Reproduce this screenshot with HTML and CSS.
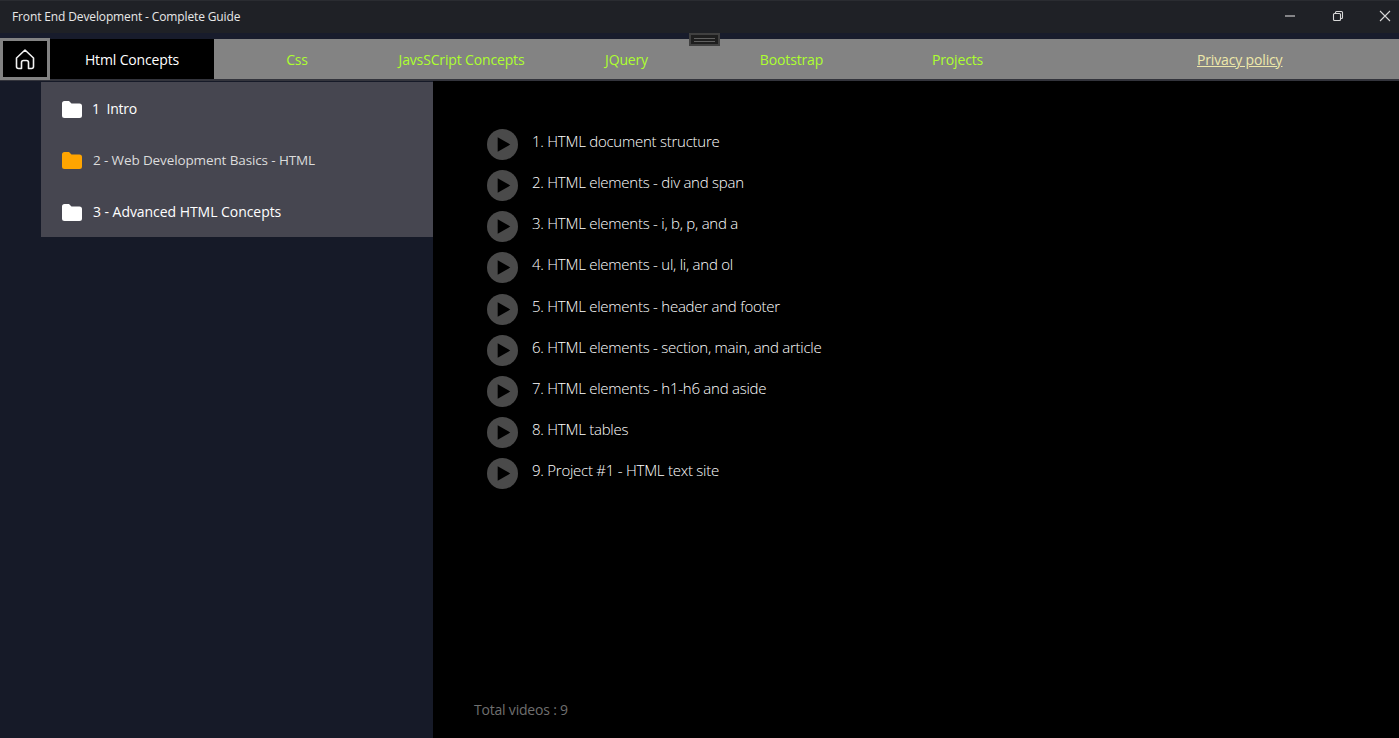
FILE: index.html
```html
<!DOCTYPE html>
<html lang="en">
<head>
<meta charset="utf-8">
<title>Front End Development - Complete Guide</title>
<link rel="stylesheet" href="styles.css">
</head>
<body>
<div class="app">
  <header class="titlebar">
    <span class="app-title">Front End Development - Complete Guide</span>
    <div class="win-controls">
      <svg class="win-icon" viewBox="0 0 12 12"><path d="M1 6h10" /></svg>
      <svg class="win-icon" viewBox="0 0 12 12"><path d="M1.5 4.5a1 1 0 0 1 1-1h5a1 1 0 0 1 1 1v5a1 1 0 0 1-1 1h-5a1 1 0 0 1-1-1zM3.5 3.5v-1a1 1 0 0 1 1-1h5a1 1 0 0 1 1 1v5a1 1 0 0 1-1 1h-1" /></svg>
      <svg class="win-icon" viewBox="0 0 12 12"><path d="M1 1l10 10M11 1L1 11" /></svg>
    </div>
  </header>
  <div class="strip"></div>
  <nav class="nav">
    <button class="home" aria-label="Home">
      <svg viewBox="0 0 24 24"><path d="M3.5 11 12 3l8.500 8v8.500a2 2 0 0 1-2 2H15.500v-6a2 2 0 0 0-2-2h-3a2 2 0 0 0-2 2v6H5.500a2 2 0 0 1-2-2z" /></svg>
    </button>
    <a class="tab active">Html Concepts</a>
    <a class="tab t-css">Css</a>
    <a class="tab t-js">JavsSCript Concepts</a>
    <a class="tab t-jq">JQuery</a>
    <a class="tab t-bs">Bootstrap</a>
    <a class="tab t-pr">Projects</a>
    <a class="privacy">Privacy policy</a>
    <div class="handle"><span></span></div>
  </nav>
  <div class="content">
    <aside class="sidebar">
      <ul class="folders">
        <li class="folder first"><svg viewBox="0 0 20 17"><path class="f-white" d="M0 2.500A2.500 2.500 0 0 1 2.500 0H7l2.500 2.500h8A2.500 2.500 0 0 1 20 5v9.500a2.500 2.500 0 0 1-2.500 2.500h-15A2.500 2.500 0 0 1 0 14.500z"/></svg><span>1&nbsp; Intro</span></li>
        <li class="folder dim"><svg viewBox="0 0 20 17"><path class="f-orange" d="M0 2.500A2.500 2.500 0 0 1 2.500 0H7l2.500 2.500h8A2.500 2.500 0 0 1 20 5v9.500a2.500 2.500 0 0 1-2.500 2.500h-15A2.500 2.500 0 0 1 0 14.500z"/></svg><span>2 - Web Development Basics - HTML</span></li>
        <li class="folder"><svg viewBox="0 0 20 17"><path class="f-white" d="M0 2.500A2.500 2.500 0 0 1 2.500 0H7l2.500 2.500h8A2.500 2.500 0 0 1 20 5v9.500a2.500 2.500 0 0 1-2.500 2.500h-15A2.500 2.500 0 0 1 0 14.500z"/></svg><span>3 - Advanced HTML Concepts</span></li>
      </ul>
    </aside>
    <main class="main">
      <ul class="videos">
        <li class="video"><svg viewBox="0 0 32 32"><circle cx="16" cy="16" r="16"/><path d="M11 8.500 24 16l-13 7.500z"/></svg><span>1. HTML document structure</span></li>
        <li class="video"><svg viewBox="0 0 32 32"><circle cx="16" cy="16" r="16"/><path d="M11 8.500 24 16l-13 7.500z"/></svg><span>2. HTML elements - div and span</span></li>
        <li class="video"><svg viewBox="0 0 32 32"><circle cx="16" cy="16" r="16"/><path d="M11 8.500 24 16l-13 7.500z"/></svg><span>3. HTML elements - i, b, p, and a</span></li>
        <li class="video"><svg viewBox="0 0 32 32"><circle cx="16" cy="16" r="16"/><path d="M11 8.500 24 16l-13 7.500z"/></svg><span>4. HTML elements - ul, li, and ol</span></li>
        <li class="video"><svg viewBox="0 0 32 32"><circle cx="16" cy="16" r="16"/><path d="M11 8.500 24 16l-13 7.500z"/></svg><span>5. HTML elements - header and footer</span></li>
        <li class="video"><svg viewBox="0 0 32 32"><circle cx="16" cy="16" r="16"/><path d="M11 8.500 24 16l-13 7.500z"/></svg><span>6. HTML elements - section, main, and article</span></li>
        <li class="video"><svg viewBox="0 0 32 32"><circle cx="16" cy="16" r="16"/><path d="M11 8.500 24 16l-13 7.500z"/></svg><span>7. HTML elements - h1-h6 and aside</span></li>
        <li class="video"><svg viewBox="0 0 32 32"><circle cx="16" cy="16" r="16"/><path d="M11 8.500 24 16l-13 7.500z"/></svg><span>8. HTML tables</span></li>
        <li class="video"><svg viewBox="0 0 32 32"><circle cx="16" cy="16" r="16"/><path d="M11 8.500 24 16l-13 7.500z"/></svg><span>9. Project #1 - HTML text site</span></li>
      </ul>
      <p class="total">Total videos : 9</p>
    </main>
  </div>
</div>
</body>
</html>
```
FILE: styles.css
```css
* { box-sizing: border-box; }
html, body { margin: 0; height: 100%; background: #161a28; overflow: hidden; }
body { font-family: "Open Sans", "Noto Sans", sans-serif; color: #fff; }
ul { list-style: none; margin: 0; padding: 0; }

.app { width: 1399px; height: 738px; display: flex; flex-direction: column; }

.titlebar {
  height: 33px; background: #1f2126; display: flex; align-items: center;
  justify-content: space-between; padding: 0 8px 2px 12px; border-top: 1px solid #2a2c31;
}
.app-title { font-size: 12px; font-weight: 500; color: #e8e8e8; letter-spacing: -0.13px; }
.win-controls { display: flex; gap: 35.500px; align-items: center; }
.win-icon { width: 12px; height: 12px; fill: none; stroke: #d8d8d8; stroke-width: 1.100; }
.strip { height: 6px; background: #181c2c; }

.nav {
  position: relative; height: 42px; background: #838383; display: flex; align-items: center;
  border-bottom: 2px solid #33343c; font-size: 14px; letter-spacing: -0.15px;
}
.home {
  width: 50px; height: 42px; background: #000; border: 3px solid #838383;
  padding: 0; display: flex; align-items: center; justify-content: center;
}
.home svg { width: 24px; height: 24px; fill: none; stroke: #f2f2f2; stroke-width: 1.600; stroke-linejoin: round; }
.tab { display: flex; align-items: center; justify-content: center; color: #adff2f; height: 100%; }
.tab.active { width: 164px; background: #000; color: #fff; }
.t-css { width: 166px; }
.t-js { width: 163px; }
.t-jq { width: 167px; }
.t-bs { width: 163px; }
.t-pr { width: 169px; }
.privacy { margin-left: 155px; color: #eee8aa; text-decoration: underline; }
.handle {
  position: absolute; left: 689px; top: -6px; width: 31px; height: 13px;
  background: #1e1e1e; border: 2px solid #404040; display: flex; align-items: center; justify-content: center;
}
.handle span { width: 21px; height: 4px; border-top: 1px solid #606060; border-bottom: 1px solid #606060; }

.content { flex: 1; display: flex; min-height: 0; }
.sidebar { width: 433px; padding: 1px 0 0 41px; }
.folders { background: #464650; height: 155px; padding: 1px 0 0 21px; }
.folder { height: 51.500px; display: flex; align-items: center; gap: 11px; font-size: 14px; letter-spacing: -0.05px; padding-bottom: 1.500px; }
.folder svg { width: 20px; height: 17px; flex: none; position: relative; top: 1px; }
.folder.first { gap: 10px; letter-spacing: -0.25px; }
.folder.dim { font-size: 13.500px; letter-spacing: -0.12px; color: #dcdcdc; }
.f-white { fill: #fff; }
.f-orange { fill: #ffa500; }

.main { flex: 1; background: #000; position: relative; padding: 39.500px 0 0 54px; display: flex; flex-direction: column; }
.videos { flex: 1; }
.video { height: 41.150px; display: flex; align-items: center; gap: 14px; font-size: 15px; font-weight: 300; letter-spacing: -0.25px; color: #fff; }
.video svg { width: 31px; height: 31px; flex: none; position: relative; top: 3.500px; }
.video circle { fill: #4a4a4a; }
.video path { fill: #000; }
.total { margin: 0 0 19px -13px; font-size: 14px; letter-spacing: -0.2px; color: #6f6f6f; }
```
